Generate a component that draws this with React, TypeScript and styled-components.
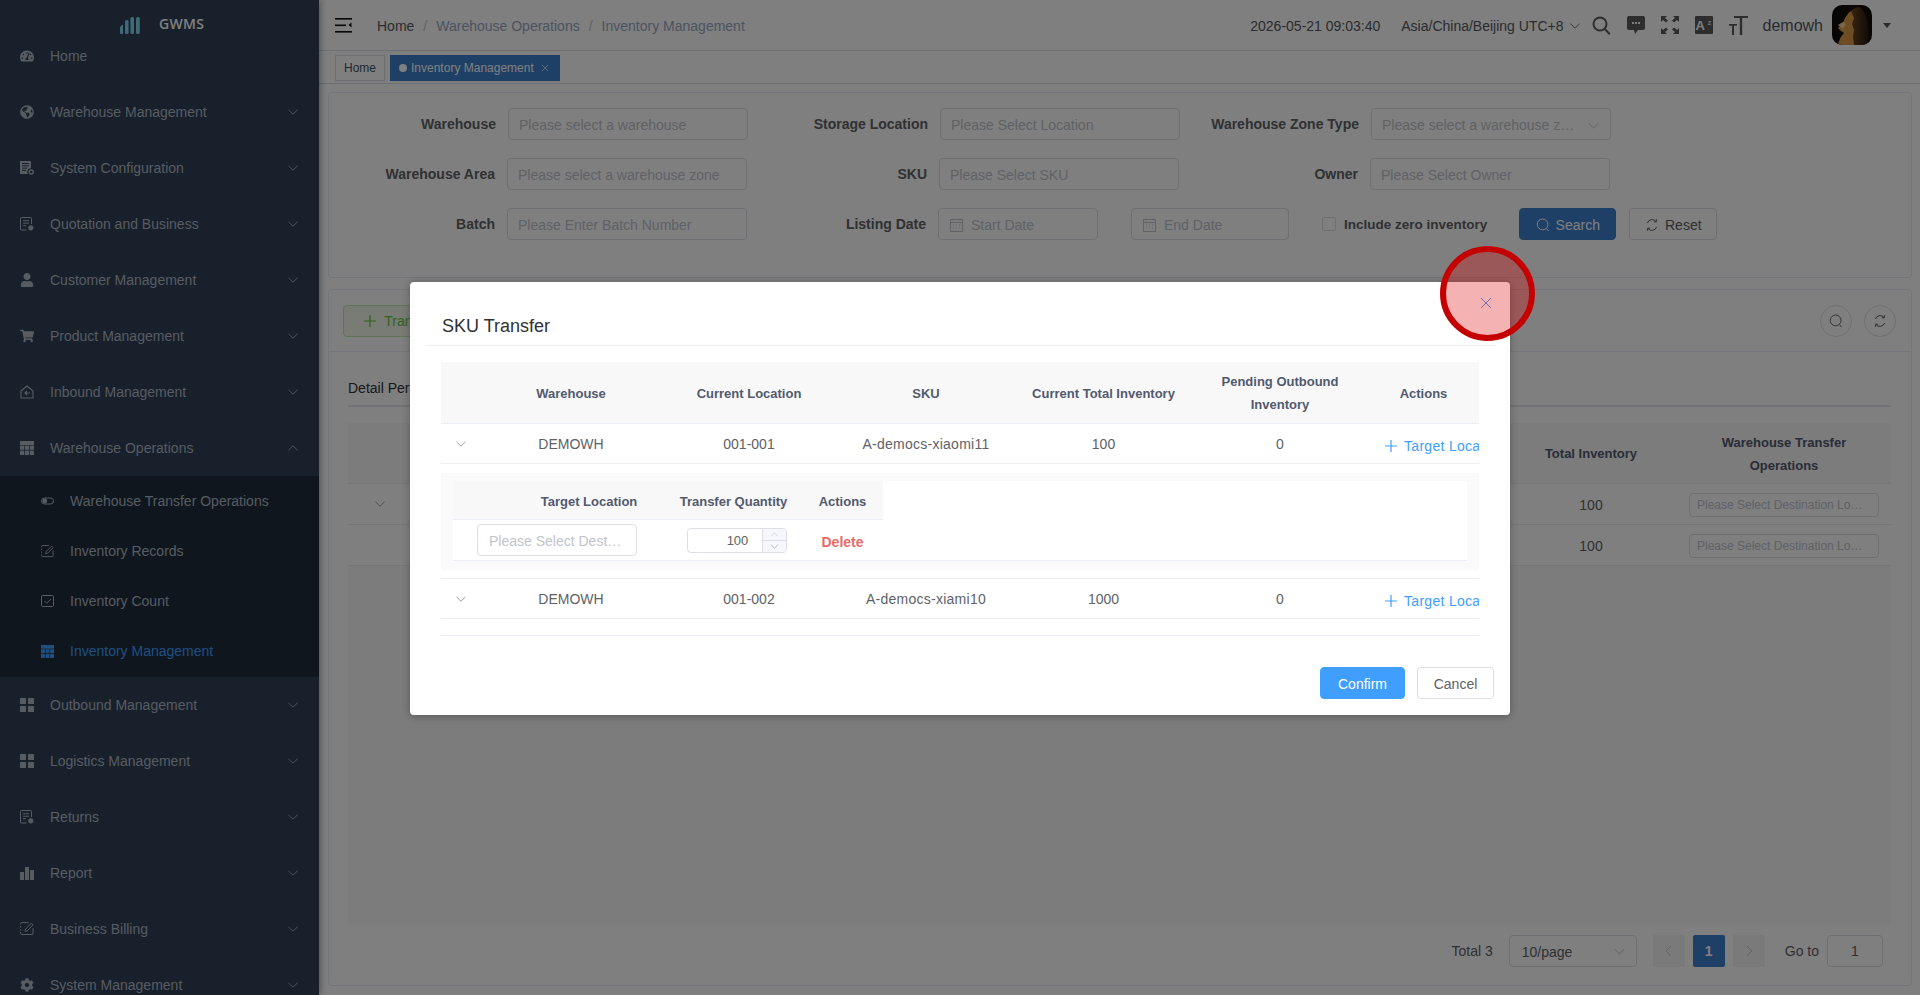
import React from "react";
import styled, { createGlobalStyle } from "styled-components";
import { FaTachometerAlt, FaGlobeAmericas, FaUser, FaShoppingCart, FaCog } from "react-icons/fa";

const Global = createGlobalStyle`
  html, body { margin: 0; padding: 0; width: 1920px; height: 995px; overflow: hidden; background: #fff; }
  body { font-family: "Liberation Sans", Arial, sans-serif; font-size: 14px; color: #606266; }
  * { box-sizing: border-box; }
  input { font-family: inherit; }
  input::placeholder { color: #c0c4cc; opacity: 1; }
`;

const Page = styled.div`
  position: relative;
  display: flex;
  width: 1920px;
  height: 995px;
  overflow: hidden;
  background: #fff;
`;

/* ---------- small drawings ---------- */
const Chevron = ({ up, size = 12, color = "currentColor" }: { up?: boolean; size?: number; color?: string }) => (
  <svg width={size} height={size} viewBox="0 0 12 12" fill="none" stroke={color} strokeWidth="0.9">
    <path d={up ? "M1.5 8.2 6 3.8l4.5 4.4" : "M1.5 3.8 6 8.2l4.5-4.4"} />
  </svg>
);
const DocGear = () => (
  <svg width="14" height="14" viewBox="0 0 14 14" fill="currentColor">
    <path d="M0 0h11v7.4a3.4 3.4 0 0 0-3 5.6H0z" />
    <path d="M2 2.5h7M2 4.8h7M2 7.1h5M2 9.4h4" stroke="#304156" strokeWidth="1" />
    <circle cx="11.2" cy="11" r="2" fill="none" stroke="currentColor" strokeWidth="1.3" />
  </svg>
);
const DocUser = () => (
  <svg width="14" height="14" viewBox="0 0 14 14" fill="none" stroke="currentColor" strokeWidth="1">
    <path d="M6.5 13H1.5a1 1 0 0 1-1-1V1.5a1 1 0 0 1 1-1h9a1 1 0 0 1 1 1V7" />
    <path d="M3 3.7h6M3 6.2h6M3 8.7h3" />
    <circle cx="10.8" cy="10.8" r="2.6" fill="currentColor" stroke="none" />
  </svg>
);
const HomeIn = () => (
  <svg width="14" height="14" viewBox="0 0 14 14" fill="none" stroke="currentColor" strokeWidth="1.1">
    <path d="M1 6 7 1l6 5v7H1z" />
    <path d="M10 8H5M7 6 5 8l2 2" />
  </svg>
);
const TableIco = ({ size = 14 }: { size?: number }) => (
  <svg width={size} height={size} viewBox="0 0 14 14" fill="currentColor">
    <rect x="0" y="0" width="14" height="4" />
    <rect x="0" y="4.6" width="4.2" height="4.2" /><rect x="4.9" y="4.6" width="4.2" height="4.2" /><rect x="9.8" y="4.6" width="4.2" height="4.2" />
    <rect x="0" y="9.6" width="4.2" height="4.4" /><rect x="4.9" y="9.6" width="4.2" height="4.4" /><rect x="9.8" y="9.6" width="4.2" height="4.4" />
  </svg>
);
const Squares = () => (
  <svg width="14" height="14" viewBox="0 0 14 14" fill="currentColor">
    <rect x="0" y="0" width="6" height="6" rx=".6" /><rect x="8" y="0" width="6" height="6" rx=".6" />
    <rect x="0" y="8" width="6" height="6" rx=".6" /><rect x="8" y="8" width="6" height="6" rx=".6" />
  </svg>
);
const Bars = () => (
  <svg width="14" height="14" viewBox="0 0 14 14" fill="currentColor">
    <rect x="0" y="6" width="4" height="8" /><rect x="5" y="1" width="4" height="13" /><rect x="10" y="4" width="4" height="10" />
  </svg>
);
const EditIco = ({ size = 14 }: { size?: number }) => (
  <svg width={size} height={size} viewBox="0 0 14 14" fill="none" stroke="currentColor" strokeWidth="1">
    <path d="M.6 2.5V1.6a1 1 0 0 1 1-1h7M.6 4v1.5M.6 7v1.5M.6 10v1.5a1.2 1.2 0 0 0 1 1h10.4a1 1 0 0 0 1-1V6" />
    <path d="M5 9.3 5.6 7l5.8-5.8 1.7 1.7L7.3 8.7z" />
  </svg>
);
const ToggleIco = () => (
  <svg width="13" height="14" viewBox="0 0 13 14" fill="none" stroke="currentColor" strokeWidth="1">
    <rect x=".5" y="4" width="12" height="6" rx="3" />
    <circle cx="3.8" cy="7" r="2.4" fill="currentColor" stroke="none" />
  </svg>
);
const CheckIco = () => (
  <svg width="13" height="14" viewBox="0 0 13 14" fill="none" stroke="currentColor" strokeWidth="1">
    <rect x=".5" y="1.5" width="12" height="11" rx="1" />
    <path d="m3.5 7 2.2 2.2 4-4" />
  </svg>
);
const Calendar = () => (
  <svg width="13" height="14" viewBox="0 0 13 14" fill="none" stroke="#c0c4cc" strokeWidth="1">
    <rect x=".5" y="1.5" width="12" height="12" />
    <path d="M.5 4.5h12M3 .5v2M10 .5v2M3 7h1M6 7h1M9 7h1M3 10h1M6 10h1M9 10h1" />
  </svg>
);
const SearchThin = ({ size = 14, color = "currentColor" }: { size?: number; color?: string }) => (
  <svg width={size} height={size} viewBox="0 0 14 14" fill="none" stroke={color} strokeWidth="1">
    <circle cx="6.6" cy="6.4" r="5.4" />
    <path d="m10.4 10.6 2.2 2.4" />
  </svg>
);
const RefreshThin = ({ size = 14, color = "currentColor" }: { size?: number; color?: string }) => (
  <svg width={size} height={size} viewBox="0 0 14 14" fill="none" stroke={color} strokeWidth="1">
    <path d="M2.4 5A5 5 0 0 1 11 3.4M11.6 9A5 5 0 0 1 3 10.6" />
    <path d="M11.4 1.2v2.6H8.9M2.6 12.8v-2.6h2.5" />
  </svg>
);
const Cross = ({ size = 16, color = "currentColor" }: { size?: number; color?: string }) => (
  <svg width={size} height={size} viewBox="0 0 16 16" fill="none" stroke={color} strokeWidth="1">
    <path d="m3 3 10 10M13 3 3 13" />
  </svg>
);
const Plus = ({ size = 12, color = "currentColor" }: { size?: number; color?: string }) => (
  <svg width={size} height={size} viewBox="0 0 12 12" fill="none" stroke={color} strokeWidth="1.2">
    <path d="M6 0v12M0 6h12" />
  </svg>
);

/* ---------- sidebar ---------- */
const Sidebar = styled.aside`
  flex: 0 0 319px;
  height: 995px;
  background: #304156;
  color: #adb8c4;
  overflow: hidden;
  box-shadow: 2px 0 6px rgba(0, 21, 41, 0.35);
  position: relative;
  z-index: 2;
`;
const Logo = styled.div`
  height: 28px;
  padding: 16px 0 0 118px;
  display: flex;
  align-items: flex-start;
  gap: 17px;
  color: #fff;
  font-family: "Open Sans", "Liberation Sans", sans-serif;
  font-size: 14px;
  font-weight: 600;
  letter-spacing: 0.3px;
  line-height: 16px;
`;
const MenuItem = styled.div`
  height: 56px;
  padding: 0 20px;
  display: flex;
  align-items: center;
  font-size: 14px;
  > svg:first-child { flex: 0 0 14px; margin-right: 16px; }
  > span { flex: 1; white-space: nowrap; }
`;
const SubMenu = styled.div`
  background: #1f2d3d;
  padding-bottom: 1px;
`;
const SubItem = styled.div<{ $active?: boolean }>`
  height: 50px;
  padding-left: 41px;
  display: flex;
  align-items: center;
  font-size: 14px;
  color: ${(p) => (p.$active ? "#409eff" : "#adb8c4")};
  > svg { margin-right: 16px; flex: 0 0 13px; }
`;

const menuTop: [React.ReactNode, string][] = [
  [<FaGlobeAmericas size={14} />, "Warehouse Management"],
  [<DocGear />, "System Configuration"],
  [<DocUser />, "Quotation and Business"],
  [<FaUser size={14} />, "Customer Management"],
  [<FaShoppingCart size={14} />, "Product Management"],
  [<HomeIn />, "Inbound Management"],
];
const menuBottom: [React.ReactNode, string][] = [
  [<Squares />, "Outbound Management"],
  [<Squares />, "Logistics Management"],
  [<DocUser />, "Returns"],
  [<Bars />, "Report"],
  [<EditIco />, "Business Billing"],
  [<FaCog size={14} />, "System Management"],
];

/* ---------- main ---------- */
const Main = styled.main`
  flex: 1;
  min-width: 0;
  display: flex;
  flex-direction: column;
`;
const Navbar = styled.header`
  height: 51px;
  flex: none;
  display: flex;
  align-items: center;
  padding: 0 29px 0 16px;
  border-bottom: 1px solid #dcdfe6;
  background: #fff;
`;
const Hamburger = styled.svg`
  margin-right: 25px;
  color: #111;
`;
const Crumbs = styled.nav`
  display: flex;
  flex: 1;
  padding-top: 2px;
  font-size: 14px;
  color: #97a8be;
  gap: 9px;
  > b { font-weight: 400; color: #c0c4cc; }
  > span:first-child { color: #55585e; }
`;
const NavText = styled.span<{ $size?: number; $ml?: number }>`
  color: #55585e;
  font-size: ${(p) => p.$size ?? 14}px;
  margin-left: ${(p) => p.$ml ?? 0}px;
  padding-top: 1px;
  white-space: nowrap;
`;
const TzSelect = styled.div`
  display: flex;
  align-items: center;
  gap: 5px;
  margin-left: 21px;
  padding-top: 1px;
  color: #55585e;
  white-space: nowrap;
`;
const NavIcons = styled.div`
  display: flex;
  align-items: center;
  gap: 16px;
  margin-left: 11px;
  color: #5a5a5a;
`;
const TranslateBox = styled.div`
  width: 18px;
  height: 18px;
  border-radius: 1px;
  background: #5a5a5a;
  color: #fff;
  font-size: 13px;
  font-weight: 700;
  line-height: 19px;
  padding-left: 1px;
  position: relative;
  > i {
    position: absolute;
    right: 1px;
    top: -3px;
    font-size: 8px;
    font-style: normal;
    font-weight: 400;
  }
`;
const Avatar = styled.svg`
  margin-left: 9px;
  border-radius: 10px;
  display: block;
`;
const Caret = styled.div`
  width: 0;
  height: 0;
  margin-left: 11px;
  border: 4px solid transparent;
  border-top: 5px solid #555;
  border-bottom: 0;
`;

const Tags = styled.div`
  height: 33px;
  flex: none;
  display: flex;
  align-items: flex-start;
  gap: 5px;
  padding: 4px 0 0 16px;
  border-bottom: 1px solid #dcdfe6;
`;
const Tag = styled.div<{ $active?: boolean }>`
  height: 26px;
  display: flex;
  align-items: center;
  padding: ${(p) => (p.$active ? "0 9px 0 8px" : "0 8px")};
  font-size: 12px;
  white-space: nowrap;
  color: ${(p) => (p.$active ? "#fff" : "#495060")};
  background: ${(p) => (p.$active ? "#3d80cc" : "#fff")};
  border: 1px solid ${(p) => (p.$active ? "#3d80cc" : "#d8dce5")};
`;
const TagDot = styled.i`
  width: 8px;
  height: 8px;
  border-radius: 50%;
  background: #fff;
  margin-right: 4px;
`;
const TagClose = styled.span`
  display: flex;
  margin-left: 6px;
`;

const Content = styled.div`
  flex: 1;
  min-height: 0;
  padding: 8px 8px 9px 9px;
  display: flex;
  flex-direction: column;
  gap: 11px;
`;
const Card = styled.section`
  border: 1px solid #e6ebf5;
  border-radius: 4px;
  background: #fff;
`;
const SearchCard = styled(Card)`
  height: 186px;
  flex: none;
  padding-top: 15px;
  display: flex;
  flex-direction: column;
  gap: 18px;
`;
const FormRow = styled.div<{ $cols: string }>`
  display: grid;
  grid-template-columns: ${(p) => p.$cols};
  align-items: center;
  height: 32px;
`;
const Label = styled.label`
  text-align: right;
  padding-right: 12px;
  font-weight: 700;
  font-size: 14px;
  color: #606266;
  white-space: nowrap;
`;
const Input = styled.input`
  width: 100%;
  height: 32px;
  padding: 2px 10px 0;
  border: 1px solid #dcdfe6;
  border-radius: 4px;
  font-size: 14px;
  color: #606266;
  outline: none;
  background: #fff;
  text-overflow: ellipsis;
`;
const SelectBox = styled.div`
  height: 32px;
  display: flex;
  align-items: center;
  padding: 2px 10px 0;
  border: 1px solid #dcdfe6;
  border-radius: 4px;
  color: #c0c4cc;
  font-size: 14px;
  > span { flex: 1; white-space: nowrap; overflow: hidden; text-overflow: ellipsis; }
  > svg { flex: none; margin-left: 8px; }
`;
const DateBox = styled.div<{ $w: number }>`
  width: ${(p) => p.$w}px;
  height: 32px;
  display: flex;
  align-items: center;
  gap: 8px;
  padding: 2px 0 0 11px;
  border: 1px solid #dcdfe6;
  border-radius: 4px;
  color: #c0c4cc;
  font-size: 14px;
`;
const FormTail = styled.div`
  display: flex;
  align-items: center;
  margin-left: 33px;
`;
const Checkbox = styled.div`
  display: flex;
  align-items: center;
  gap: 8px;
  margin-left: 33px;
  margin-right: 32px;
  font-weight: 700;
  font-size: 13.5px;
  color: #606266;
  white-space: nowrap;
  > i {
    width: 14px;
    height: 14px;
    border: 1px solid #dcdfe6;
    border-radius: 2px;
  }
`;
const Button = styled.button<{ $kind?: "primary" | "default" | "success" | "confirm"; $w?: number }>`
  height: 32px;
  width: ${(p) => (p.$w ? `${p.$w}px` : "auto")};
  display: inline-flex;
  align-items: center;
  justify-content: center;
  gap: 6px;
  font: inherit;
  font-size: 14px;
  border-radius: 4px;
  padding: 1px 0 0;
  white-space: nowrap;
  border: 1px solid
    ${(p) =>
      p.$kind === "primary" ? "#3d80cc" : p.$kind === "confirm" ? "#409eff" : p.$kind === "success" ? "#c2e7b0" : "#dcdfe6"};
  background: ${(p) =>
    p.$kind === "primary" ? "#3d80cc" : p.$kind === "confirm" ? "#409eff" : p.$kind === "success" ? "#f0f9eb" : "#fff"};
  color: ${(p) =>
    p.$kind === "primary" || p.$kind === "confirm" ? "#fff" : p.$kind === "success" ? "#67c23a" : "#606266"};
`;
const ResetButton = styled(Button)`
  margin-left: 13px;
`;
const TransferButton = styled(Button)`
  gap: 8px;
`;

const TableCard = styled(Card)`
  flex: 1;
  min-height: 0;
  display: flex;
  flex-direction: column;
`;
const Toolbar = styled.div`
  height: 62px;
  flex: none;
  display: flex;
  align-items: center;
  justify-content: space-between;
  padding: 0 15px 0 14px;
  border-bottom: 1px solid #e6ebf5;
`;
const CircleGroup = styled.div`
  display: flex;
  gap: 12px;
`;
const CircleBtn = styled.div`
  width: 32px;
  height: 32px;
  border-radius: 50%;
  border: 1px solid #dcdfe6;
  display: flex;
  align-items: center;
  justify-content: center;
  color: #606266;
`;
const TabBar = styled.div`
  margin: 0 20px 16px 19px;
  height: 55px;
  flex: none;
  padding-top: 27px;
  border-bottom: 2px solid #e4e7ed;
  font-size: 14px;
  color: #303133;
  line-height: 18px;
`;
const BgTable = styled.div`
  margin: 0 20px 0 19px;
  flex: none;
`;
const BgRow = styled.div<{ $h: number; $head?: boolean }>`
  display: grid;
  grid-template-columns: 64px 1fr 172px 214px;
  height: ${(p) => p.$h}px;
  padding-top: ${(p) => (p.$head ? 1 : 2)}px;
  align-items: center;
  text-align: center;
  border-bottom: 1px solid #ebeef5;
  background: ${(p) => (p.$head ? "#f8f8f9" : "#fff")};
  font-weight: ${(p) => (p.$head ? 700 : 400)};
  color: ${(p) => (p.$head ? "#515a6e" : "#606266")};
  font-size: ${(p) => (p.$head ? 13 : 14)}px;
  line-height: 23px;
`;
const BgFill = styled.div`
  height: 358px;
  background: #f9f9fa;
`;
const MiniInput = styled(Input)`
  display: block;
  width: 190px;
  height: 24px;
  margin: 0 auto;
  font-size: 12px;
  padding: 0 15px 0 7px;
`;
const Pager = styled.div`
  margin-top: auto;
  padding: 0 28px 18px 0;
  display: flex;
  justify-content: flex-end;
  align-items: center;
  font-size: 14px;
  color: #606266;
`;
const PageSize = styled(SelectBox)`
  width: 128px;
  margin: 0 16px 0 16px;
  color: #606266;
  padding: 1px 10px 0 12px;
`;
const PageBtn = styled.div<{ $active?: boolean }>`
  width: 32px;
  height: 32px;
  margin-right: 8px;
  border-radius: 2px;
  display: flex;
  align-items: center;
  justify-content: center;
  font-weight: 700;
  background: ${(p) => (p.$active ? "#3d80cc" : "#f4f4f5")};
  color: ${(p) => (p.$active ? "#fff" : "#c0c4cc")};
`;
const GoTo = styled.span`
  margin: 0 8px 0 12px;
`;
const GoInput = styled.div`
  width: 56px;
  height: 32px;
  border: 1px solid #dcdfe6;
  border-radius: 4px;
  display: flex;
  align-items: center;
  justify-content: center;
`;

/* ---------- overlay + dialog ---------- */
const Mask = styled.div`
  position: absolute;
  inset: 0;
  z-index: 10;
  background: rgba(0, 0, 0, 0.5);
`;
const Dialog = styled.div`
  position: absolute;
  z-index: 11;
  left: 410px;
  top: 282px;
  width: 1100px;
  height: 433px;
  background: #fff;
  border-radius: 4px;
  box-shadow: 0 1px 8px rgba(0, 0, 0, 0.3);
  display: flex;
  flex-direction: column;
`;
const DialogHead = styled.div`
  height: 64px;
  flex: none;
  margin: 0 15px 0 16px;
  padding: 32px 0 0 16px;
  border-bottom: 1px solid #ebeef5;
  font-size: 18px;
  line-height: 24px;
  color: #303133;
`;
const CloseBtn = styled.div`
  position: absolute;
  right: 16px;
  top: 13px;
  display: flex;
`;
const DialogBody = styled.div`
  margin: 16px 31px 0;
  overflow: hidden;
  flex: none;
`;
const Row = styled.div<{ $h: number; $head?: boolean; $top?: boolean }>`
  display: grid;
  grid-template-columns: 40px 180px 176px 178px 177px 176px 111px;
  height: ${(p) => p.$h}px;
  padding-top: 2px;
  align-items: center;
  text-align: center;
  font-size: ${(p) => (p.$head ? 13 : 14)}px;
  line-height: 23px;
  background: ${(p) => (p.$head ? "#f8f8f9" : "#fff")};
  font-weight: ${(p) => (p.$head ? 700 : 400)};
  color: ${(p) => (p.$head ? "#515a6e" : "#606266")};
  border-bottom: 1px solid #ebeef5;
  ${(p) => (p.$top ? "border-top: 1px solid #ebeef5;" : "")}
`;
const PendingHead = styled.span`
  margin-top: -2px;
`;
const SkuCell = styled.span`
  letter-spacing: 0.25px;
`;
const Expand = styled.div`
  display: flex;
  justify-content: center;
  margin-top: -2px;
  color: #909399;
`;
const LinkCell = styled.div`
  display: flex;
  align-items: center;
  gap: 7px;
  padding: 3px 0 0 17px;
  color: #409eff;
  letter-spacing: 0.3px;
  white-space: nowrap;
  overflow: hidden;
  > svg { flex: none; }
`;
const Expanded = styled.div`
  margin: 9px 0 8px;
  height: 97px;
  padding: 8px 12px 9px;
  background: #fafafa;
`;
const InnerTable = styled.div`
  background: #fff;
  height: 80px;
  border-bottom: 1px solid #ebeef5;
`;
const InnerHead = styled.div`
  display: grid;
  grid-template-columns: 212px 137px 81px;
  width: 430px;
  height: 39px;
  padding-top: 2px;
  align-items: center;
  text-align: center;
  background: #f8f8f9;
  border-bottom: 1px solid #ebeef5;
  font-weight: 700;
  color: #515a6e;
  font-size: 13px;
  > span:first-child { padding-left: 60px; }
`;
const InnerRow = styled.div`
  display: grid;
  grid-template-columns: 212px 137px 81px;
  width: 430px;
  height: 40px;
  align-items: center;
  text-align: center;
`;
const DestInput = styled(Input)`
  width: 160px;
  margin-left: 24px;
  font-size: 14px;
  padding: 2px 12px 0 11px;
`;
const NumberInput = styled.div`
  width: 100px;
  height: 25px;
  margin-left: 22px;
  display: grid;
  grid-template-columns: 1fr 24px;
  border: 1px solid #dcdfe6;
  border-radius: 4px;
  overflow: hidden;
  font-size: 13px;
  line-height: 23px;
  color: #606266;
`;
const NumberValue = styled.div`
  padding-left: 25px;
  text-align: center;
`;
const Stepper = styled.div`
  display: flex;
  flex-direction: column;
  border-left: 1px solid #dcdfe6;
  background: #f5f7fa;
  color: #909399;
  > div { flex: 1; display: flex; align-items: center; justify-content: center; }
  > div:first-child { border-bottom: 1px solid #dcdfe6; }
`;
const DeleteText = styled.span`
  color: #e96a6a;
  font-weight: 700;
  padding-top: 3px;
`;
const Spacer = styled.div`
  height: 17px;
  border-bottom: 1px solid #ebeef5;
`;
const DialogFoot = styled.div`
  margin-top: auto;
  padding: 0 16px 16px 0;
  display: flex;
  justify-content: flex-end;
  gap: 12px;
`;
const Marker = styled.div`
  position: absolute;
  z-index: 12;
  left: 1440px;
  top: 246px;
  width: 95px;
  height: 95px;
  border-radius: 50%;
  border: 6px solid #c40000;
  background: rgba(220, 0, 0, 0.3);
  pointer-events: none;
`;

export default function App() {
  return (
    <Page>
      <Global />
      <Sidebar>
        <Logo>
          <svg width="24" height="18" viewBox="0 0 22 18" fill="#7fd6ee">
            <path d="M1 11.5c0-1.5 3-3 3-3V18H2c-1 0-1-1-1-2z" />
            <rect x="6" y="4" width="3.6" height="14" rx="1.6" />
            <rect x="11.4" y="1" width="3.6" height="17" rx="1.6" />
            <rect x="17" y="1" width="3.8" height="17" rx="1.6" />
          </svg>
          <span>GWMS</span>
        </Logo>
        <MenuItem><FaTachometerAlt size={14} /><span>Home</span></MenuItem>
        {menuTop.map(([icon, text]) => (
          <MenuItem key={text}>{icon}<span>{text}</span><Chevron /></MenuItem>
        ))}
        <MenuItem><TableIco /><span>Warehouse Operations</span><Chevron up /></MenuItem>
        <SubMenu>
          <SubItem><ToggleIco />Warehouse Transfer Operations</SubItem>
          <SubItem><EditIco size={13} />Inventory Records</SubItem>
          <SubItem><CheckIco />Inventory Count</SubItem>
          <SubItem $active><TableIco size={13} />Inventory Management</SubItem>
        </SubMenu>
        {menuBottom.map(([icon, text]) => (
          <MenuItem key={text}>{icon}<span>{text}</span><Chevron /></MenuItem>
        ))}
      </Sidebar>

      <Main>
        <Navbar>
          <Hamburger width="17" height="15" viewBox="0 0 17 15" fill="currentColor">
            <rect y="0" width="17" height="1.6" />
            <rect y="6.5" width="11" height="1.6" />
            <rect y="13" width="17" height="1.6" />
            <path d="M16.5 4.6v5l-3-2.5z" />
          </Hamburger>
          <Crumbs>
            <span>Home</span><b>/</b><span>Warehouse Operations</span><b>/</b><span>Inventory Management</span>
          </Crumbs>
          <NavText>2026-05-21 09:03:40</NavText>
          <TzSelect>Asia/China/Beijing UTC+8 <Chevron size={12} /></TzSelect>
          <NavIcons>
            <svg width="19" height="19" viewBox="0 0 19 19" fill="none" stroke="currentColor" strokeWidth="2">
              <circle cx="8" cy="8" r="6.5" /><path d="m12.8 13 5 5.2" />
            </svg>
            <svg width="18" height="18" viewBox="0 0 18 18" fill="currentColor">
              <path d="M2 0h14a2 2 0 0 1 2 2v10a2 2 0 0 1-2 2h-5l-3 4-1-4H2a2 2 0 0 1-2-2V2a2 2 0 0 1 2-2z" />
              <g fill="#fff"><rect x="5" y="6" width="2" height="2" /><rect x="8" y="6" width="2" height="2" /><rect x="11" y="6" width="2" height="2" /></g>
            </svg>
            <svg width="18" height="18" viewBox="0 0 18 18" fill="currentColor">
              <path d="M0 0h6L4 2l3 2.5L5 6.5 2 4 0 6zM18 0h-6l2 2-3 2.5 2 2L16 4l2 2zM0 18h6l-2-2 3-2.5-2-2L2 14l-2-2zM18 18h-6l2-2-3-2.5 2-2 3 2.5 2-2z" />
            </svg>
            <TranslateBox>A<i>z</i></TranslateBox>
            <svg width="19" height="19" viewBox="0 0 19 19" fill="currentColor">
              <rect x="5" y="0" width="14" height="2" /><rect x="10.8" y="0" width="2.4" height="19" />
              <rect x="0" y="8" width="8" height="1.7" /><rect x="3" y="8" width="2" height="11" />
            </svg>
          </NavIcons>
          <NavText $size={16} $ml={15}>demowh</NavText>
          <Avatar width="40" height="40" viewBox="0 0 40 40">
            <defs>
              <linearGradient id="mane" x1="0" y1="0" x2="1" y2="0">
                <stop offset="0" stopColor="#8a5a28" />
                <stop offset="1" stopColor="#1c130c" />
              </linearGradient>
            </defs>
            <rect width="40" height="40" fill="#0f0c0a" />
            <path d="M13 40V14C16 8 20 3 27 2c5 3 8 9 9 17l2 21z" fill="url(#mane)" />
            <path d="M11 18c1-4 4-9 8-12l3 7-2 6 2 6-1 7 1 8H6c1-5 3-9 6-12l-3-2-3-3z" fill="#d89a48" />
            <path d="M6 20l5-3 3 2-3 5z" fill="#f2cf96" />
          </Avatar>
          <Caret />
        </Navbar>

        <Tags>
          <Tag>Home</Tag>
          <Tag $active><TagDot />Inventory Management<TagClose><Cross size={10} /></TagClose></Tag>
        </Tags>

        <Content>
          <SearchCard>
            <FormRow $cols="179px 240px 192px 240px 191px 240px">
              <Label>Warehouse</Label><Input placeholder="Please select a warehouse" />
              <Label>Storage Location</Label><Input placeholder="Please Select Location" />
              <Label>Warehouse Zone Type</Label>
              <SelectBox><span>Please select a warehouse zone type</span><Chevron size={13} color="#c0c4cc" /></SelectBox>
            </FormRow>
            <FormRow $cols="178px 240px 192px 240px 191px 240px">
              <Label>Warehouse Area</Label><Input placeholder="Please select a warehouse zone" />
              <Label>SKU</Label><Input placeholder="Please Select SKU" />
              <Label>Owner</Label><Input placeholder="Please Select Owner" />
            </FormRow>
            <FormRow $cols="178px 240px 191px 160px auto">
              <Label>Batch</Label><Input placeholder="Please Enter Batch Number" />
              <Label>Listing Date</Label>
              <DateBox $w={160}><Calendar />Start Date</DateBox>
              <FormTail>
                <DateBox $w={158}><Calendar />End Date</DateBox>
                <Checkbox><i />Include zero inventory</Checkbox>
                <Button $kind="primary" $w={97}><SearchThin size={14} />Search</Button>
                <ResetButton $w={88}><RefreshThin size={14} />Reset</ResetButton>
              </FormTail>
            </FormRow>
          </SearchCard>

          <TableCard>
            <Toolbar>
              <TransferButton $kind="success" $w={114}><Plus size={12} />Transfer</TransferButton>
              <CircleGroup>
                <CircleBtn><SearchThin size={14} /></CircleBtn>
                <CircleBtn><RefreshThin size={14} /></CircleBtn>
              </CircleGroup>
            </Toolbar>
            <TabBar>Detail Perspective</TabBar>
            <BgTable>
              <BgRow $h={61} $head>
                <span /><span />
                <span>Total Inventory</span>
                <span>Warehouse Transfer<br />Operations</span>
              </BgRow>
              <BgRow $h={41}>
                <Expand><Chevron /></Expand><span />
                <span>100</span>
                <MiniInput placeholder="Please Select Destination Location" />
              </BgRow>
              <BgRow $h={41}>
                <span /><span />
                <span>100</span>
                <MiniInput placeholder="Please Select Destination Location" />
              </BgRow>
              <BgFill />
            </BgTable>
            <Pager>
              <span>Total 3</span>
              <PageSize><span>10/page</span><Chevron size={13} color="#c0c4cc" /></PageSize>
              <PageBtn><svg width="10" height="12" viewBox="0 0 10 12" fill="none" stroke="currentColor"><path d="M7 1 2 6l5 5" /></svg></PageBtn>
              <PageBtn $active>1</PageBtn>
              <PageBtn><svg width="10" height="12" viewBox="0 0 10 12" fill="none" stroke="currentColor"><path d="m3 1 5 5-5 5" /></svg></PageBtn>
              <GoTo>Go to</GoTo>
              <GoInput>1</GoInput>
            </Pager>
          </TableCard>
        </Content>
      </Main>

      <Mask />
      <Dialog>
        <DialogHead>SKU Transfer</DialogHead>
        <CloseBtn><Cross size={16} color="#409eff" /></CloseBtn>
        <DialogBody>
          <Row $h={62} $head>
            <span />
            <span>Warehouse</span>
            <span>Current Location</span>
            <span>SKU</span>
            <span>Current Total Inventory</span>
            <PendingHead>Pending Outbound<br />Inventory</PendingHead>
            <span>Actions</span>
          </Row>
          <Row $h={40}>
            <Expand><Chevron /></Expand>
            <span>DEMOWH</span>
            <span>001-001</span>
            <SkuCell>A-democs-xiaomi11</SkuCell>
            <span>100</span>
            <span>0</span>
            <LinkCell><Plus />Target Location</LinkCell>
          </Row>
          <Expanded>
            <InnerTable>
              <InnerHead>
                <span>Target Location</span>
                <span>Transfer Quantity</span>
                <span>Actions</span>
              </InnerHead>
              <InnerRow>
                <DestInput placeholder="Please Select Destination" />
                <NumberInput>
                  <NumberValue>100</NumberValue>
                  <Stepper>
                    <div><Chevron up size={9} color="#c0c4cc" /></div>
                    <div><Chevron size={9} /></div>
                  </Stepper>
                </NumberInput>
                <DeleteText>Delete</DeleteText>
              </InnerRow>
            </InnerTable>
          </Expanded>
          <Row $h={41} $top>
            <Expand><Chevron /></Expand>
            <span>DEMOWH</span>
            <span>001-002</span>
            <SkuCell>A-democs-xiami10</SkuCell>
            <span>1000</span>
            <span>0</span>
            <LinkCell><Plus />Target Location</LinkCell>
          </Row>
          <Spacer />
        </DialogBody>
        <DialogFoot>
          <Button $kind="confirm" $w={85}>Confirm</Button>
          <Button $w={77}>Cancel</Button>
        </DialogFoot>
      </Dialog>
      <Marker />
    </Page>
  );
}
